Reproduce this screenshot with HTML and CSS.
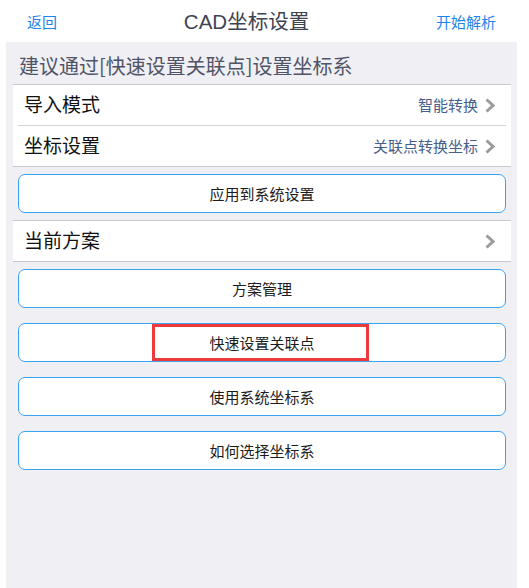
FILE: index.html
```html
<!DOCTYPE html>
<html lang="zh-CN">
<head>
    <meta charset="UTF-8">
    <meta name="viewport" content="width=device-width, initial-scale=1.0">
    <title>CAD坐标设置</title>
    <link rel="stylesheet" href="styles.css">
</head>
<body>
    <header class="nav">
        <a class="nav-link">返回</a>
        <h1 class="nav-title">CAD坐标设置</h1>
        <a class="nav-link">开始解析</a>
    </header>

    <main class="panel">
        <p class="hint">建议通过[快速设置关联点]设置坐标系</p>

        <ul class="group">
            <li class="cell">
                <span class="cell-label">导入模式</span>
                <span class="cell-value">智能转换</span>
                <svg class="chevron" width="10" height="15" viewBox="0 0 10 15"><polyline points="1.5,1.5 8,7.5 1.5,13.5" /></svg>
            </li>
            <li class="cell">
                <span class="cell-label">坐标设置</span>
                <span class="cell-value">关联点转换坐标</span>
                <svg class="chevron" width="10" height="15" viewBox="0 0 10 15"><polyline points="1.5,1.5 8,7.5 1.5,13.5" /></svg>
            </li>
        </ul>

        <button class="action" type="button">应用到系统设置</button>

        <ul class="group">
            <li class="cell">
                <span class="cell-label">当前方案</span>
                <span class="cell-value"></span>
                <svg class="chevron" width="10" height="15" viewBox="0 0 10 15"><polyline points="1.5,1.5 8,7.5 1.5,13.5" /></svg>
            </li>
        </ul>

        <button class="action" type="button">方案管理</button>
        <button class="action marked" type="button">快速设置关联点<span class="mark"></span></button>
        <button class="action" type="button">使用系统坐标系</button>
        <button class="action" type="button">如何选择坐标系</button>
    </main>
</body>
</html>
```

FILE: styles.css
```css
body {
    margin: 0;
    background-color: #ffffff;
    font-family: "Noto Sans CJK SC", "Liberation Sans", sans-serif;
}
.nav {
    display: flex;
    align-items: center;
    height: 42px;
    padding: 1px 33px 0 27px;
    box-sizing: border-box;
}
.nav-link {
    color: #1f84ea;
    font-size: 15px;
    line-height: 20px;
    cursor: pointer;
}
.nav-title {
    flex: 1;
    margin: 0;
    text-align: center;
    font-family: "Liberation Sans", "Noto Sans CJK SC", sans-serif;
    font-size: 20.5px;
    font-weight: normal;
    color: #3e4352;
    line-height: 26px;
}
.panel {
    display: flex;
    flex-direction: column;
    margin: 0 12px 0 6px;
    padding: 0 6px 20px 7px;
    min-height: calc(100vh - 42px);
    box-sizing: border-box;
    background-color: #efeff4;
}
.hint {
    margin: 0;
    padding: 12px 0 6px 6px;
    font-size: 20px;
    line-height: 24px;
    height: 24px;
    color: #4f5466;
    white-space: nowrap;
}
.group {
    list-style: none;
    margin: 0;
    padding: 0;
    background-color: #ffffff;
    border-top: 1px solid #c8c7cc;
    border-bottom: 1px solid #c8c7cc;
}
.group + .action {
    margin-top: 7px;
}
.action + .group {
    margin-top: 7px;
}
.cell {
    display: flex;
    align-items: center;
    height: 40px;
    padding: 0 16px 0 11px;
    position: relative;
}
.cell + .cell {
    margin-top: 1px;
}
.cell + .cell::before {
    content: "";
    position: absolute;
    left: 5px;
    right: 5px;
    top: -1px;
    height: 1px;
    background-color: #d4d3d8;
}
.cell-label {
    flex: 1;
    font-size: 19px;
    line-height: 22px;
    padding-bottom: 2px;
    color: #111111;
}
.cell-value {
    font-size: 15px;
    line-height: 18px;
    padding-bottom: 1px;
    color: #475e8b;
    margin-right: 7px;
}
.chevron polyline {
    fill: none;
    stroke: #9b9b9b;
    stroke-width: 3;
}
.action {
    height: 39px;
    margin: 0 5px;
    padding: 0;
    border: 1px solid #3aa2f2;
    border-radius: 7px;
    background-color: #ffffff;
    font-family: "Noto Sans CJK SC", "Liberation Sans", sans-serif;
    font-size: 15px;
    color: #1c1c1c;
    cursor: pointer;
}
.action + .action {
    margin-top: 15px;
}
.marked {
    position: relative;
}
.mark {
    position: absolute;
    left: 133px;
    top: 0;
    width: 217px;
    height: 37px;
    border: 3px solid #f0393b;
    box-sizing: border-box;
}
```
